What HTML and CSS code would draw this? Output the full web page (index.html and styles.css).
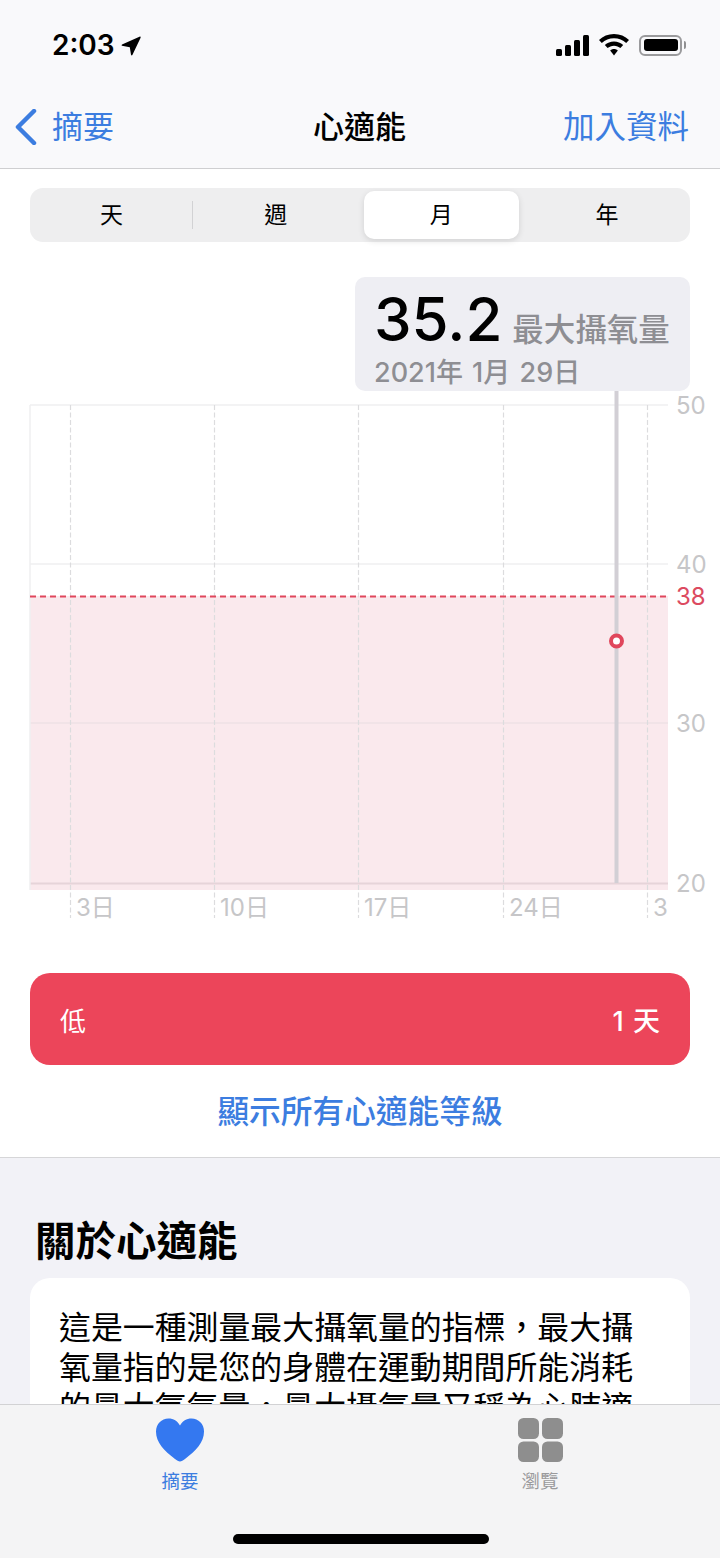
FILE: index.html
```html
<!DOCTYPE html>
<html lang="zh-Hant">
<head>
    <meta charset="UTF-8">
    <title>心適能</title>
    <link rel="stylesheet" href="styles.css">
</head>
<body>
<div class="screen">
    <header class="top-bar">
        <div class="status">
            <div class="status-time">
                <span>2:03</span>
                <svg class="arrow" width="20" height="20" viewBox="0 0 20 20"><path d="M19 0.500 Q20 0.500 19.600 1.700 L11.500 18.800 Q10.800 20 10 18.800 L8.800 11.300 L1 9.800 Q0 9.300 1 8.600 Z"/></svg>
            </div>
            <div class="status-icons">
                <svg width="33" height="21" viewBox="0 0 33 21">
                    <rect x="0" y="14" width="6" height="7" rx="1.500"/>
                    <rect x="9" y="10" width="6" height="11" rx="1.500"/>
                    <rect x="18" y="5" width="6" height="16" rx="1.500"/>
                    <rect x="27" y="0" width="6" height="21" rx="1.500"/>
                </svg>
                <svg width="30" height="22" viewBox="0 0 30 22">
                    <path d="M15 0 C9 0 4 2.300 0 6 L2.800 9 C6 6 10.300 4.200 15 4.200 C19.700 4.200 24 6 27.200 9 L30 6 C26 2.300 21 0 15 0Z"/>
                    <path d="M15 7.500 C11.500 7.500 8.300 8.900 5.800 11.100 L8.600 14.100 C10.300 12.600 12.500 11.700 15 11.700 C17.500 11.700 19.700 12.600 21.400 14.100 L24.200 11.100 C21.700 8.900 18.500 7.500 15 7.500Z"/>
                    <path d="M15 15 C13.500 15 12.200 15.500 11.200 16.500 L15 21.500 L18.800 16.500 C17.800 15.500 16.500 15 15 15Z"/>
                </svg>
                <div class="battery"><div class="battery-fill"></div></div>
            </div>
        </div>
        <nav class="nav">
            <a class="nav-back">
                <svg width="22" height="36" viewBox="0 0 22 36"><path d="M19 2 L3 18 L19 34" fill="none" stroke="#3c7de0" stroke-width="4.500" stroke-linecap="round" stroke-linejoin="round"/></svg>
                <span>摘要</span>
            </a>
            <div class="nav-title">心適能</div>
            <a class="nav-add">加入資料</a>
        </nav>
    </header>

    <main>
        <section class="summary">
            <div class="segments">
                <div class="segment segment-first">天</div>
                <div class="segment">週</div>
                <div class="segment segment-on">月</div>
                <div class="segment">年</div>
            </div>

            <div class="chart">
                <svg class="chart-plot" width="720" height="680" viewBox="0 260 720 680">
                    <rect x="30" y="596" width="638" height="294" fill="#fae9ed"/>
                    <g stroke="#efeff0" stroke-width="1.500">
                        <line x1="30" y1="405" x2="668" y2="405"/>
                        <line x1="30" y1="564" x2="668" y2="564"/>
                        <line x1="30" y1="723" x2="668" y2="723" stroke="#eee0e4"/>
                        <line x1="30" y1="883.500" x2="668" y2="883.500" stroke="#e6d4d9" stroke-width="2"/>
                        <line x1="30" y1="405" x2="30" y2="890"/>
                    </g>
                    <g stroke="#dcdcde" stroke-width="1.200" stroke-dasharray="5 2.500">
                        <line x1="70.500" y1="405" x2="70.500" y2="918"/>
                        <line x1="214.500" y1="405" x2="214.500" y2="918"/>
                        <line x1="358.500" y1="405" x2="358.500" y2="918"/>
                        <line x1="503.500" y1="405" x2="503.500" y2="918"/>
                        <line x1="647.500" y1="405" x2="647.500" y2="918"/>
                    </g>
                    <line x1="30" y1="596.500" x2="668" y2="596.500" stroke="#e0465c" stroke-width="2" stroke-dasharray="6 4"/>
                    <line x1="616.500" y1="390" x2="616.500" y2="883" stroke="#d2cfd5" stroke-width="4"/>
                    <circle cx="616.500" cy="641" r="5.500" fill="#fff" stroke="#e0465c" stroke-width="4"/>
                    <g class="axis-y">
                        <text x="676" y="414">50</text>
                        <text x="676" y="573">40</text>
                        <text class="axis-goal" x="676" y="605">38</text>
                        <text x="676" y="732">30</text>
                        <text x="676" y="892">20</text>
                    </g>
                    <g class="axis-x">
                        <text x="76" y="916">3日</text>
                        <text x="220" y="916">10日</text>
                        <text x="364" y="916">17日</text>
                        <text x="509" y="916">24日</text>
                        <text x="653" y="916">3</text>
                    </g>
                </svg>
                <div class="readout">
                    <div class="readout-main">
                        <span class="readout-value">35.2</span>
                        <span class="readout-unit">最大攝氧量</span>
                    </div>
                    <div class="readout-date">2021年 1月 29日</div>
                </div>
            </div>

            <div class="level-card">
                <span>低</span>
                <span class="level-days">1 天</span>
            </div>
            <a class="show-all">顯示所有心適能等級</a>
        </section>

        <section class="about">
            <h2>關於心適能</h2>
            <div class="about-card">這是一種測量最大攝氧量的指標，最大攝氧量指的是您的身體在運動期間所能消耗的最大氧氣量，最大攝氧量又稱為心肺適能。</div>
        </section>
    </main>

    <footer class="tab-bar">
        <div class="tabs">
            <div class="tab tab-on">
                <svg width="48" height="43" viewBox="0 0 48 43"><path d="M24 43 C22.500 43 21 42 19 40.500 C8 32 0 24 0 13 C0 5.500 5.500 0 12.500 0 C17.500 0 21.500 2.500 24 7 C26.500 2.500 30.500 0 35.500 0 C42.500 0 48 5.500 48 13 C48 24 40 32 29 40.500 C27 42 25.500 43 24 43Z" fill="#3478f0"/></svg>
                <span>摘要</span>
            </div>
            <div class="tab">
                <svg width="45" height="44" viewBox="0 0 45 44" fill="#8e8e8e">
                    <rect x="0" y="0" width="21" height="21" rx="5.500"/>
                    <rect x="24" y="0" width="21" height="21" rx="5.500"/>
                    <rect x="0" y="23.500" width="21" height="20.500" rx="5.500"/>
                    <rect x="24" y="23.500" width="21" height="20.500" rx="5.500"/>
                </svg>
                <span>瀏覽</span>
            </div>
        </div>
        <div class="home-bar"></div>
    </footer>
</div>
</body>
</html>
```

FILE: styles.css
```css
* {
    box-sizing: border-box;
}

body {
    margin: 0;
    font-family: Inter, "Noto Sans CJK TC", sans-serif;
    color: #000;
    background: #fff;
}

.screen {
    position: relative;
    width: 720px;
    height: 1558px;
    overflow: hidden;
    background: #f2f2f7;
}

/* top bar */
.top-bar {
    height: 169px;
    background: #f9f9fb;
    border-bottom: 1px solid #cfcfd1;
}

.status {
    display: flex;
    justify-content: space-between;
    align-items: center;
    height: 90px;
    padding: 0 38px 0 52px;
}

.status-time {
    display: flex;
    align-items: center;
    gap: 6px;
    font-size: 28px;
    font-weight: 600;
}

.arrow {
    margin-top: 1px;
}

.status-icons {
    display: flex;
    align-items: center;
    gap: 10px;
}

.battery {
    position: relative;
    width: 43px;
    height: 21px;
    padding: 2.500px;
    border: 2px solid #9a9a9c;
    border-radius: 6px;
}

.battery::after {
    content: "";
    position: absolute;
    top: 4.500px;
    right: -6px;
    width: 2px;
    height: 8px;
    border-radius: 0 2px 2px 0;
    background: #8f8f91;
}

.battery-fill {
    height: 100%;
    border-radius: 3px;
    background: #000;
}

.nav {
    display: grid;
    grid-template-columns: 298px auto 1fr;
    align-items: center;
    height: 78px;
    padding: 0 31px 4px 15px;
    font-size: 31px;
    line-height: 40px;
}

.nav-back {
    display: flex;
    align-items: center;
    gap: 15px;
    color: #3c7de0;
}

.nav-title {
    font-weight: 500;
}

.nav-add {
    text-align: right;
    font-size: 31.500px;
    color: #3c7de0;
}

/* summary */
.summary {
    height: 989px;
    padding-top: 19px;
    background: #fff;
    border-bottom: 1px solid #d6d6d8;
}

.segments {
    display: grid;
    grid-template-columns: 163px 165.500px 165.500px 1fr;
    height: 54px;
    margin: 0 30px;
    border-radius: 13px;
    background: #eeeeef;
    font-size: 23px;
}

.segment {
    position: relative;
    display: flex;
    justify-content: center;
    align-items: center;
    padding-bottom: 4px;
}

.segment-first::after {
    content: "";
    position: absolute;
    top: 13px;
    right: 0;
    width: 1px;
    height: 28px;
    background: #d2d2d4;
}

.segment-on {
    margin: 3px 5px;
    border-radius: 10px;
    background: #fff;
    box-shadow: 0 2px 6px rgba(0, 0, 0, 0.12);
}

.chart {
    position: relative;
    height: 680px;
    margin-top: 18px;
}

.chart-plot {
    display: block;
}

.axis-y text {
    font-size: 24px;
    fill: #c6c6c8;
}

.axis-y .axis-goal {
    fill: #dc4a60;
}

.axis-x text {
    font-size: 24px;
    fill: #c6c6c8;
}

.readout {
    position: absolute;
    top: 17px;
    left: 355px;
    width: 335px;
    height: 114px;
    padding: 7px 0 0 19px;
    border-radius: 10px;
    background: #eeeef3;
}

.readout-main {
    display: flex;
    align-items: baseline;
    gap: 10px;
    height: 70px;
}

.readout-value {
    font-size: 60px;
    font-weight: 500;
    line-height: 70px;
}

.readout-unit {
    font-size: 31.500px;
    font-weight: 500;
    color: #8e8e93;
}

.readout-date {
    font-size: 27px;
    font-weight: 500;
    word-spacing: 2px;
    line-height: 38px;
    color: #8e8e93;
}

.level-card {
    display: flex;
    justify-content: space-between;
    align-items: center;
    height: 92px;
    margin: 33px 30px 0;
    padding: 0 30px;
    border-radius: 20px;
    background: #ec455a;
    color: #fff;
    font-size: 26px;
}

.level-days {
    font-size: 27px;
    font-weight: 500;
    word-spacing: 2px;
}

.show-all {
    display: block;
    margin-top: 27px;
    text-align: center;
    font-size: 31.700px;
    font-weight: 500;
    line-height: 40px;
    color: #3c7de0;
}

/* about */
.about {
    padding: 58px 30px 0;
}

.about h2 {
    margin: 0 0 10px 5px;
    font-size: 40.500px;
    font-weight: 700;
    line-height: 52px;
}

.about-card {
    padding: 30px 29px 40px;
    border-radius: 20px;
    background: #fff;
    font-size: 31.900px;
    line-height: 40px;
}

/* tab bar */
.tab-bar {
    position: absolute;
    left: 0;
    right: 0;
    bottom: 0;
    height: 154px;
    background: #f4f4f5;
    border-top: 1px solid #d2d2d4;
}

.tabs {
    display: grid;
    grid-template-columns: 1fr 1fr;
    padding-top: 13px;
}

.tab {
    display: flex;
    flex-direction: column;
    align-items: center;
    font-size: 18.500px;
    line-height: 28px;
    color: #9a9a9c;
}

.tab svg {
    height: 44px;
    margin-bottom: 5px;
}

.tab-on {
    color: #3c7de0;
}

.home-bar {
    position: absolute;
    left: 233px;
    bottom: 14px;
    width: 256px;
    height: 10px;
    border-radius: 5px;
    background: #000;
}
```
